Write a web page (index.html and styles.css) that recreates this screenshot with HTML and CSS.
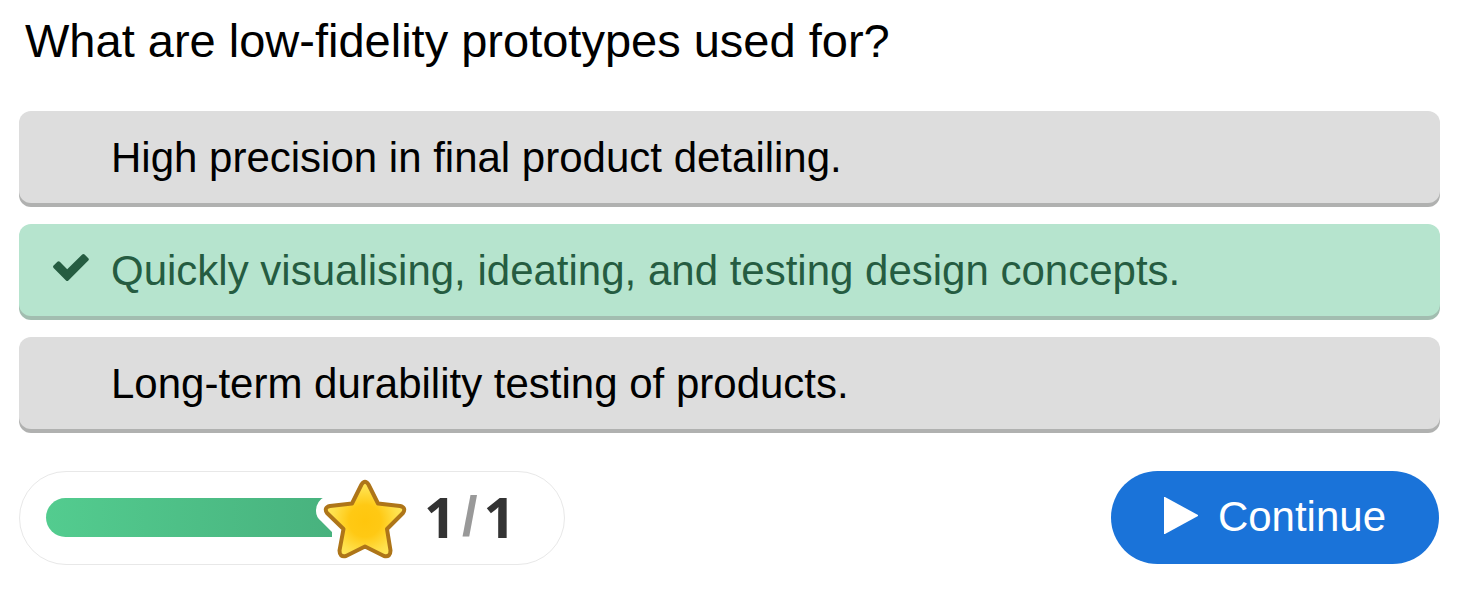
FILE: index.html
```html
<!DOCTYPE html>
<html lang="en">
<head>
<meta charset="utf-8">
<title>Quiz question</title>
<link rel="stylesheet" href="styles.css">
</head>
<body>
<main class="quiz">
  <h1 class="question" id="question">What are low-fidelity prototypes used for?</h1>
  <ul class="answers" aria-labelledby="question">
    <li><button type="button" class="answer"><span class="mark"></span><span>High precision in final product detailing.</span></button></li>
    <li><button type="button" class="answer correct"><span class="mark"><svg class="check" viewBox="0 0 38 30" aria-hidden="true"><path d="M1.600 12.600 L5.400 8.800 Q6.600 7.800 7.800 8.800 L15.200 16.200 L30.200 1.400 Q31.400 .400 32.600 1.400 L36.300 5.200 Q37.400 6.400 36.300 7.600 L16.400 27.400 Q15.200 28.600 14 27.400 L1.600 15 Q.500 13.800 1.600 12.600 Z"/></svg></span><span>Quickly visualising, ideating, and testing design concepts.</span></button></li>
    <li><button type="button" class="answer"><span class="mark"></span><span>Long-term durability testing of products.</span></button></li>
  </ul>
  <footer class="footer">
    <div class="score">
      <div class="bar"></div>
      <svg class="star" viewBox="0 0 94 84" aria-hidden="true">
        <defs>
          <radialGradient id="gold" gradientUnits="userSpaceOnUse" cx="51" cy="46" r="40">
            <stop offset="0" stop-color="#ffc60d"/>
            <stop offset=".4" stop-color="#ffc914"/>
            <stop offset=".8" stop-color="#ffe04a"/>
            <stop offset="1" stop-color="#ffe75a"/>
          </radialGradient>
        </defs>
        <path fill="#fff" d="M12 21 Q2 26 2 36 Q2 42 7 46 L18 57 V65 H34 V21 Z"/>
        <path class="star-shape" d="M47.500 9.500 Q51 4 54.500 9.500 L64 28.500 L86 31 Q92.500 32.500 89 38 L73 54 L76.500 75.500 Q76.500 82.500 70 81 L51 71.500 L32 81 Q25.500 82.500 25.500 75.500 L29.500 54 L13 38 Q9.500 32.500 16 31 L38 28.500 Z"/>
      </svg>
      <p class="points"><span>1</span><span class="slash">/</span><span>1</span></p>
    </div>
    <button type="button" class="continue"><svg class="play" viewBox="0 0 34 40" aria-hidden="true"><path d="M0 0 H1 L34 18 V19 L1 37 H0 Z"/></svg>Continue</button>
  </footer>
</main>
</body>
</html>
```
FILE: styles.css
```css
* {
  box-sizing: border-box;
}

body {
  margin: 0;
  background: #fff;
  color: #000;
  font-family: "Liberation Sans", Arial, sans-serif;
}

.quiz {
  padding: 11px 18px 24px 19px;
}

.question {
  margin: 0 6px 40px;
  font-size: 47px;
  line-height: 60px;
  font-weight: 400;
}

.answers {
  display: grid;
  gap: 21px;
  margin: 0 0 42px;
  padding: 0;
  list-style: none;
}

.answer {
  display: flex;
  align-items: center;
  width: 100%;
  padding: 21px 32px 19px;
  border: 0;
  border-radius: 12px;
  background: #ddd;
  box-shadow: 0 4px 0 #b0b1b0;
  color: #000;
  font: 42px/52px "Liberation Sans", Arial, sans-serif;
  text-align: left;
}

.correct {
  background: #b6e4ce;
  box-shadow: 0 4px 0 #a2bdb0;
  color: #255c41;
}

.mark {
  display: flex;
  flex: 0 0 60px;
}

.check {
  width: 38px;
  height: 30px;
  margin-left: 1px;
  margin-bottom: 6px;
  fill: #255c41;
}

.footer {
  display: flex;
  align-items: flex-start;
  justify-content: space-between;
}

.score {
  display: flex;
  align-items: center;
  padding: 3px 48px 5px 26px;
  border: 1px solid #e8e8e8;
  border-radius: 48px;
}

.bar {
  width: 286px;
  height: 39px;
  border-radius: 20px 0 0 20px;
  background: linear-gradient(to right, #53cc8f, #48b27e);
}

.star {
  width: 94px;
  height: 84px;
  margin-left: -18px;
}

.star-shape {
  fill: url(#gold);
  stroke: #ae7518;
  stroke-width: 4;
  stroke-linejoin: round;
}

.points {
  display: flex;
  gap: 6px;
  height: 84px;
  margin: 0 0 0 16px;
  color: #333;
  font: 700 56px/82px "Open Sans", Arial, sans-serif;
}

.slash {
  color: #999;
  font-family: "Liberation Sans", Arial, sans-serif;
}

.continue {
  display: flex;
  align-items: center;
  gap: 20px;
  margin-right: 1px;
  padding: 19px 53px 21px;
  border: 0;
  border-radius: 48px;
  background: #1a73d9;
  color: #fff;
  font: 42px/53px "Liberation Sans", Arial, sans-serif;
}

.play {
  width: 34px;
  height: 40px;
  fill: #fff;
}
```
